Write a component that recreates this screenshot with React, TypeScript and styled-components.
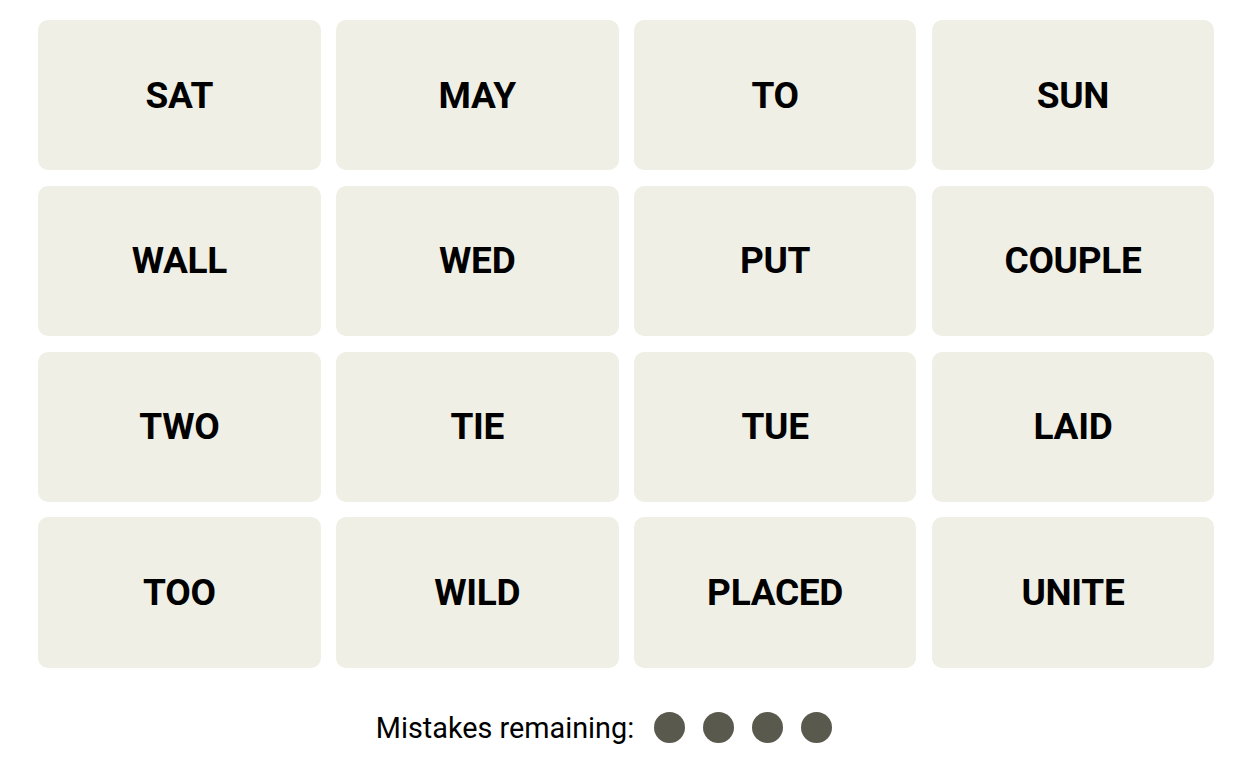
import React from "react";
import styled, { createGlobalStyle } from "styled-components";

const GlobalStyle = createGlobalStyle`
  html, body {
    margin: 0;
    padding: 0;
    background: #ffffff;
  }
  body {
    font-family: Roboto, "Liberation Sans", Arial, sans-serif;
    color: #000;
  }
`;

const Page = styled.div`
  width: 1250px;
  height: 759px;
  box-sizing: border-box;
  padding: 20px 36px 0 38px;
  display: flex;
  flex-direction: column;
`;

const Board = styled.div`
  display: grid;
  grid-template-columns: repeat(4, 282.7px);
  grid-auto-rows: 150.2px;
  column-gap: 15.2px;
  row-gap: 15.6px;
`;

const Tile = styled.button`
  all: unset;
  display: flex;
  align-items: center;
  justify-content: center;
  background: #efefe6;
  border-radius: 10px;
  font-family: Roboto, "Liberation Sans", Arial, sans-serif;
  font-weight: 700;
  font-size: 37px;
  letter-spacing: -0.3px;
  color: #000;
  text-transform: uppercase;
  cursor: pointer;
`;

const Status = styled.div`
  display: flex;
  align-items: center;
  justify-content: center;
  margin-top: 43px;
  padding-right: 44px;
  gap: 20px;
`;

const Label = styled.span`
  font-family: Roboto, "Liberation Sans", Arial, sans-serif;
  font-size: 28.8px;
  font-weight: 400;
  color: #000;
`;

const Dots = styled.div`
  display: flex;
  gap: 18px;
`;

const Dot = styled.span`
  width: 31px;
  height: 31px;
  border-radius: 50%;
  background: #5a594e;
`;

const words = [
  "SAT", "MAY", "TO", "SUN",
  "WALL", "WED", "PUT", "COUPLE",
  "TWO", "TIE", "TUE", "LAID",
  "TOO", "WILD", "PLACED", "UNITE",
];

export default function App() {
  const mistakesLeft = 4;
  return (
    <>
      <GlobalStyle />
      <Page>
        <Board>
          {words.map((w) => (
            <Tile key={w}>{w}</Tile>
          ))}
        </Board>
        <Status>
          <Label>Mistakes remaining:</Label>
          <Dots>
            {Array.from({ length: mistakesLeft }).map((_, i) => (
              <Dot key={i} />
            ))}
          </Dots>
        </Status>
      </Page>
    </>
  );
}
